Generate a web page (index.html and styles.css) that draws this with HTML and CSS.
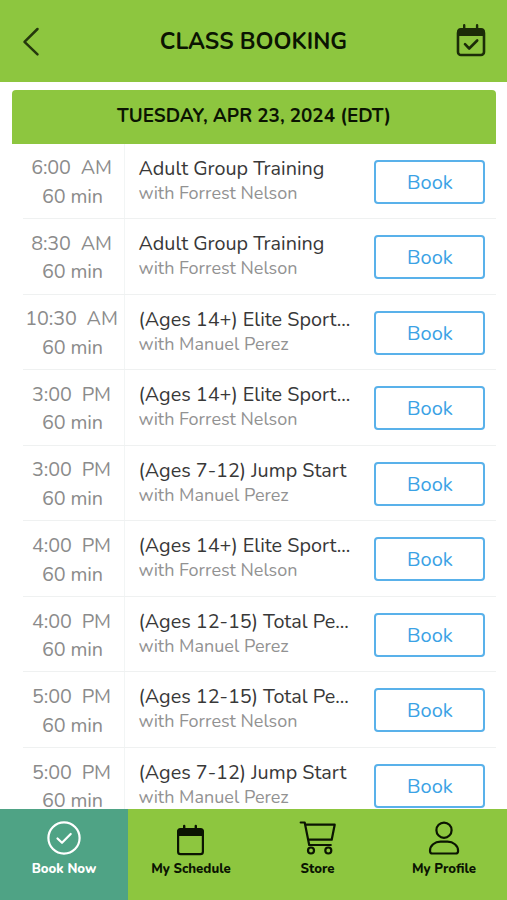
FILE: index.html
```html
<!DOCTYPE html>
<html lang="en">
<head>
<meta charset="utf-8">
<title>Class Booking</title>
<link rel="stylesheet" href="styles.css">
</head>
<body>
<div class="app">
  <header class="header">
    <svg class="back" viewBox="0 0 18 30"><path d="M15.500 2 2.500 14.800l13 12.500"/></svg>
    <h1>CLASS BOOKING</h1>
    <svg class="cal" viewBox="0 0 30 34"><path class="solid" d="M1 12V8q0-4 4-4h2V1.200q0-1.200 1.200-1.200t1.200 1.200V4h10.500V1.200q0-1.200 1.200-1.200t1.200 1.200V4H25q4 0 4 4v4z"/><rect x="2" y="6" width="26" height="25" rx="3"/><path d="m9 20.200 4.200 4.300 8-8"/></svg>
  </header>
  <main class="schedule">
    <h2>TUESDAY, APR 23, 2024 (EDT)</h2>
    <ul class="rows">
      <li class="row"><div class="when"><span class="time">6:00&nbsp; AM</span><span class="mins">60 min</span></div><div class="info"><span class="name">Adult Group Training</span><span class="coach">with Forrest Nelson</span></div><button>Book</button></li>
      <li class="row"><div class="when"><span class="time">8:30&nbsp; AM</span><span class="mins">60 min</span></div><div class="info"><span class="name">Adult Group Training</span><span class="coach">with Forrest Nelson</span></div><button>Book</button></li>
      <li class="row"><div class="when"><span class="time">10:30&nbsp; AM</span><span class="mins">60 min</span></div><div class="info"><span class="name">(Ages 14+) Elite Sport...</span><span class="coach">with Manuel Perez</span></div><button>Book</button></li>
      <li class="row"><div class="when"><span class="time">3:00&nbsp; PM</span><span class="mins">60 min</span></div><div class="info"><span class="name">(Ages 14+) Elite Sport...</span><span class="coach">with Forrest Nelson</span></div><button>Book</button></li>
      <li class="row"><div class="when"><span class="time">3:00&nbsp; PM</span><span class="mins">60 min</span></div><div class="info"><span class="name">(Ages 7-12) Jump Start</span><span class="coach">with Manuel Perez</span></div><button>Book</button></li>
      <li class="row"><div class="when"><span class="time">4:00&nbsp; PM</span><span class="mins">60 min</span></div><div class="info"><span class="name">(Ages 14+) Elite Sport...</span><span class="coach">with Forrest Nelson</span></div><button>Book</button></li>
      <li class="row"><div class="when"><span class="time">4:00&nbsp; PM</span><span class="mins">60 min</span></div><div class="info"><span class="name">(Ages 12-15) Total Pe...</span><span class="coach">with Manuel Perez</span></div><button>Book</button></li>
      <li class="row"><div class="when"><span class="time">5:00&nbsp; PM</span><span class="mins">60 min</span></div><div class="info"><span class="name">(Ages 12-15) Total Pe...</span><span class="coach">with Forrest Nelson</span></div><button>Book</button></li>
      <li class="row"><div class="when"><span class="time">5:00&nbsp; PM</span><span class="mins">60 min</span></div><div class="info"><span class="name">(Ages 7-12) Jump Start</span><span class="coach">with Manuel Perez</span></div><button>Book</button></li>
    </ul>
  </main>
  <nav class="tabs">
    <a class="tab active"><svg viewBox="0 0 38 36"><circle cx="19" cy="18" r="15.600"/><path d="m12.500 18.500 4.500 4.300 8.700-8.800"/></svg><span>Book Now</span></a>
    <a class="tab"><svg viewBox="0 0 38 36"><path class="solid" d="M5 16v-4.500q0-3.500 3.500-3.500H11V6q0-1.200 1.200-1.200T13.400 6v2h9.200V6q0-1.200 1.200-1.200T25 6v2h3.500q3.500 0 3.500 3.500V16z"/><rect x="6.100" y="10" width="24.800" height="24.200" rx="2.500"/></svg><span>My Schedule</span></a>
    <a class="tab"><svg viewBox="0 0 38 36"><path d="M1.700 2.500h4L10.200 25h21.600M6.200 4.700h29.500l-3 15H9.300"/><circle cx="12" cy="30.500" r="3"/><circle cx="29.300" cy="30.500" r="3"/></svg><span>Store</span></a>
    <a class="tab"><svg viewBox="0 0 38 36"><circle cx="19" cy="10.200" r="7.600"/><path d="M7.500 33.500h23q2.600 0 2.600-2.600c0-5.500-5-9.200-10.600-9.200h-7C9.800 21.700 5 25.400 5 30.900q0 2.600 2.500 2.600z"/></svg><span>My Profile</span></a>
  </nav>
</div>
</body>
</html>
```

FILE: styles.css
```css
* { box-sizing: border-box; }
body {
  margin: 0;
  background: #fff;
  font-family: Nunito, Lato, "Open Sans", sans-serif;
}
.app {
  display: flex;
  flex-direction: column;
  height: 900px;
  overflow: hidden;
}
svg { fill: none; stroke: #0b1402; stroke-width: 2.200; stroke-linecap: round; stroke-linejoin: round; }
svg .solid { fill: #0b1402; stroke: none; }

.header {
  flex: 0 0 81.500px;
  display: grid;
  grid-template-columns: 60px 1fr 60px;
  align-items: center;
  background: #8dc63f;
  padding: 2px 0 0;
}
.back { width: 18px; height: 30px; margin-left: 22px; stroke: #25380d; stroke-width: 2.500; }
h1 {
  margin: 0;
  padding-top: 1px;
  text-align: center;
  font-size: 22.900px;
  line-height: 30px;
  font-weight: 700;
  color: #0b1402;
}
.cal { width: 30px; height: 34px; margin: -1px 0 0 9px; stroke: #1c2c08; stroke-width: 2.600; }
.cal .solid { fill: #1c2c08; }

.schedule {
  flex: 1 1 0;
  min-height: 0;
  overflow: hidden;
  padding: 8.500px 11px 0 12px;
}
h2 {
  margin: 0;
  height: 53.500px;
  border-radius: 4px 4px 0 0;
  background: #8dc63f;
  color: #0b1402;
  text-align: center;
  font-size: 18.900px;
  line-height: 53px;
  font-weight: 700;
}
.rows { list-style: none; margin: 0; padding: 0 0 0 11px; }
.row {
  display: grid;
  grid-template-columns: 102px 1fr 111px;
  height: 75.560px;
  padding-right: 11px;
  border-bottom: 1.500px solid #eff1f1;
}
.when {
  display: flex;
  flex-direction: column;
  align-items: center;
  border-right: 1.500px solid #f2f5f5;
  padding: 10.800px 4px 0 0;
  color: #8b8b8b;
  font-size: 19.800px;
  line-height: 28.500px;
  white-space: nowrap;
}
.time { letter-spacing: -0.120px; }
.mins { letter-spacing: -0.100px; padding-left: 2px; }
.info { padding: 11px 0 0 13.500px; display: flex; flex-direction: column; white-space: nowrap; }
.name { font-size: 19.800px; line-height: 28px; color: #383838; }
.coach { font-size: 18px; line-height: 21.400px; color: #929292; }
.row button {
  margin: 16px 0 0 0.400px;
  width: 111px;
  height: 44px;
  padding: 0;
  border: 2px solid #59b1ea;
  border-radius: 4px;
  background: #fff;
  color: #3ba2e5;
  font: 20px/41px Nunito, Lato, "Open Sans", sans-serif;
}

.tabs { flex: 0 0 91px; display: grid; grid-template-columns: 128px 126px 127px 126px; background: #8dc63f; }
.tab {
  display: flex;
  flex-direction: column;
  align-items: center;
  padding-top: 11px;
  color: #0b1402;
  font-size: 13.200px;
  font-weight: 800;
  line-height: 20px;
}
.tab svg { width: 38px; height: 36px; margin-bottom: 3px; }
.tab.active { background: #4fa385; color: #fff; }
.tab.active svg { stroke: #fff; }
```
